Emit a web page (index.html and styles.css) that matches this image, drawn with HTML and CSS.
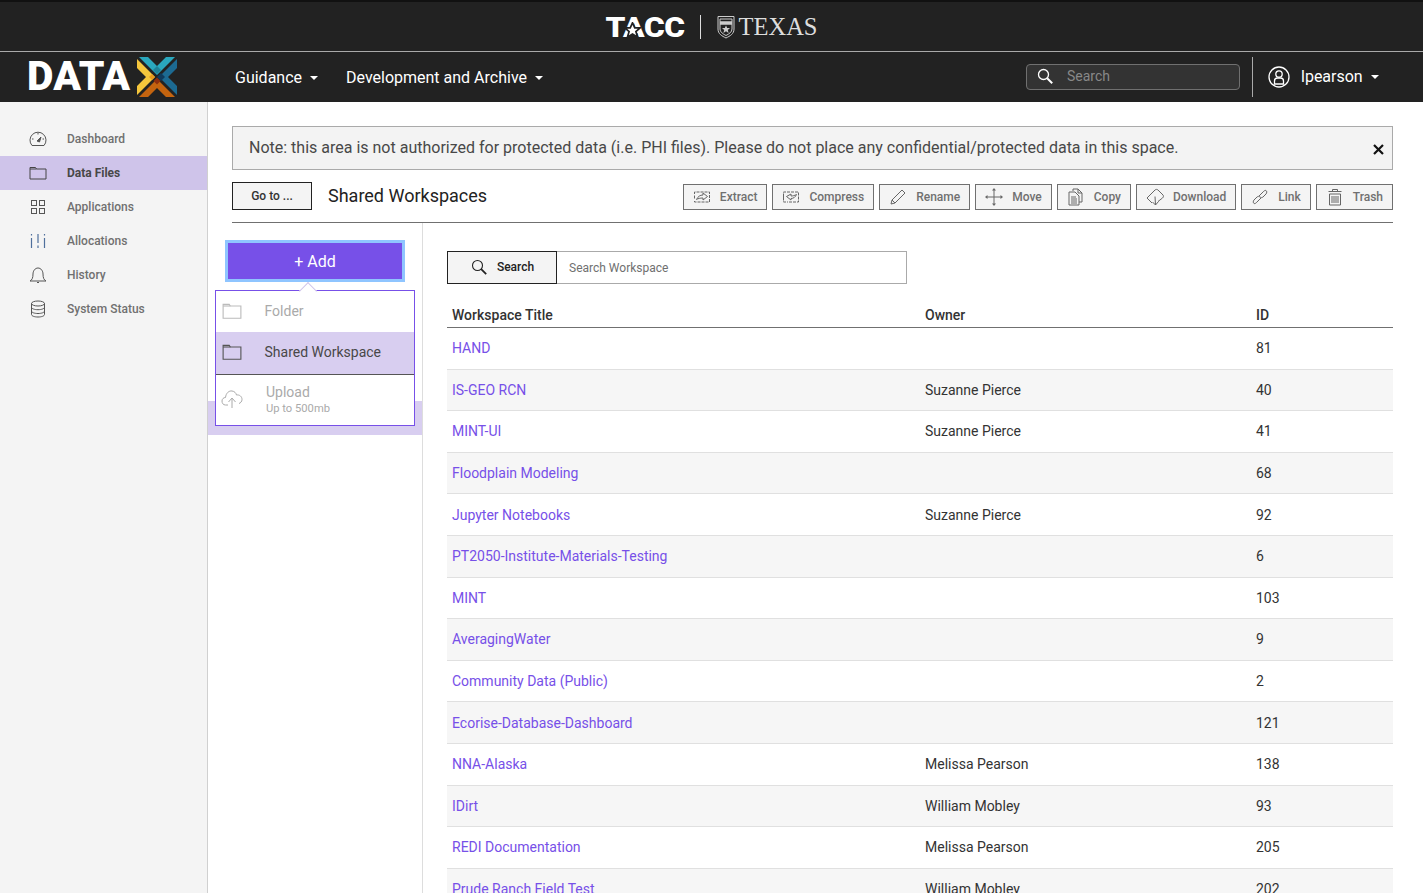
FILE: index.html
```html
<!DOCTYPE html>
<html lang="en">
<head>
    <meta charset="UTF-8">
    <title>Data Files</title>
    <link rel="stylesheet" href="styles.css">
</head>
<body>
    <div class="brand_bar">
        <span class="tacc_logo">
            <span class="tacc_text">TACC</span>
            <svg class="tacc_star" width="17" height="17" viewBox="0 0 20 20" fill="#fff" stroke="#222" stroke-width="2">
                <path d="M10 1l2.700 6h6.300l-5 4.200 2 6.800-6-3.800-6 3.800 2-6.800-5-4.200h6.300z"/>
            </svg>
        </span>
        <span class="brand_sep"></span>
        <svg class="shield" width="18" height="24" viewBox="0 0 18 24" fill="none" stroke="#ccc">
            <path d="M1 1.500h16v12.500c0 5-4 7-8 9-4-2-8-4-8-9z"/>
            <path d="M3 4h12v10c0 3-3 5-6 6.500-3-1.500-6-3.500-6-6.500z"/>
            <path d="M3 8h12" stroke-width="3.500"/>
            <path d="M9 10.500l1.200 2.500h2.800l-2.200 2 .8 3-2.600-1.700-2.600 1.700.8-3-2.200-2h2.800z" fill="#ccc" stroke="none"/>
        </svg>
        <span class="texas_logo">TEXAS</span>
    </div>

    <nav class="nav_bar">
        <a class="data_logo" href="#">
            <span class="data_text">DATA</span>
            <svg width="40" height="40" viewBox="0 0 40 40">
                <polygon points="2,0 11,0 20,9 29,0 38,0 20,18" fill="#2aa7bd"/>
                <polygon points="0,2 0,11 9,20 0,29 0,38 18,20" fill="#f5c63c"/>
                <polygon points="40,2 40,11 31,20 40,29 40,38 22,20" fill="#1c6a92"/>
                <polygon points="2,40 11,40 20,31 29,40 38,40 20,22" fill="#c4640f"/>
                <polygon points="12,20 15,17 18,20 15,23" fill="#e89a1c"/>
                <polygon points="20,20 24,16 28,20 24,24" fill="#0f3a5c"/>
                <polygon points="16.500,24 20,20.500 23.500,24 20,27.500" fill="#8f2f0e"/>
                <polygon points="16,13 20,9 24,13 20,17" fill="#1f8197"/>
            </svg>
        </a>
        <a class="nav_link" href="#">Guidance <i class="caret"></i></a>
        <a class="nav_link" href="#">Development and Archive <i class="caret"></i></a>
        <div class="nav_right">
            <div class="nav_search">
                <svg width="16" height="16" viewBox="0 0 16 16" fill="none" stroke="#fff" stroke-width="1.300">
                    <circle cx="6.500" cy="6.500" r="5"/>
                    <path d="M10.200 10.200l5 5" stroke-width="2"/>
                </svg>
                <span>Search</span>
            </div>
            <div class="nav_user">
                <svg width="22" height="22" viewBox="0 0 22 22" fill="none" stroke="#fff" stroke-width="1.300">
                    <circle cx="11" cy="11" r="10"/>
                    <circle cx="11" cy="8" r="3.200"/>
                    <path d="M6.500 18v-3c0-2 1.500-3 3-3h3c1.500 0 3 1 3 3v3z"/>
                </svg>
                <span>lpearson</span>
                <i class="caret"></i>
            </div>
        </div>
    </nav>

    <div class="page">
        <aside class="side_nav">
            <a class="side_item" href="#">
                <svg width="18" height="18" viewBox="0 0 18 18" fill="none" stroke="#555">
                    <path d="M3 15.500a8 8 0 1 1 12 0z"/>
                    <path d="M8 11l4-4-1.500 5z" fill="#555"/>
                    <path d="M9 3v1.500M3 9h1.500M15 9h-1.500"/>
                </svg>
                Dashboard
            </a>
            <a class="side_item side_active" href="#">
                <svg width="18" height="18" viewBox="0 0 18 18" fill="none" stroke="#444">
                    <path d="M1 3.500h5.500l1 1.500h9.500v10h-16z"/>
                    <path d="M1 5h6.500"/>
                </svg>
                Data Files
            </a>
            <a class="side_item" href="#">
                <svg width="18" height="18" viewBox="0 0 18 18" fill="none" stroke="#555">
                    <rect x="2.500" y="2.500" width="5" height="5"/>
                    <rect x="10.500" y="2.500" width="5" height="5"/>
                    <rect x="2.500" y="10.500" width="5" height="5"/>
                    <rect x="10.500" y="10.500" width="5" height="5"/>
                </svg>
                Applications
            </a>
            <a class="side_item" href="#">
                <svg width="18" height="18" viewBox="0 0 18 18" fill="none" stroke="#4f6f9c" stroke-width="1.200">
                    <path d="M2.500 2v1.500M2.500 6v10M9 2v9M9 13.500v2.500M15.500 2v1.500M15.500 6v10"/>
                </svg>
                Allocations
            </a>
            <a class="side_item" href="#">
                <svg width="18" height="18" viewBox="0 0 18 18" fill="none" stroke="#555">
                    <path d="M1 15c2-1 3-3 3-7 0-3 2-6 5-6s5 3 5 6c0 4 1 6 3 7z"/>
                    <path d="M8 16.500h2"/>
                </svg>
                History
            </a>
            <a class="side_item" href="#">
                <svg width="18" height="18" viewBox="0 0 18 18" fill="none" stroke="#555">
                    <ellipse cx="9" cy="3.500" rx="6.500" ry="2.500"/>
                    <path d="M2.500 3.500v11c0 1.500 3 2.500 6.500 2.500s6.500-1 6.500-2.500v-11"/>
                    <path d="M2.500 7.200c0 1.500 3 2.500 6.500 2.500s6.500-1 6.500-2.500M2.500 11c0 1.500 3 2.500 6.500 2.500s6.500-1 6.500-2.500"/>
                </svg>
                System Status
            </a>
        </aside>

        <main class="content">
            <div class="alert_box">
                <span>Note: this area is not authorized for protected data (i.e. PHI files). Please do not place any confidential/protected data in this space.</span>
                <svg class="alert_close" width="11" height="11" viewBox="0 0 11 11" stroke="#111" stroke-width="2.200">
                    <path d="M1 1l9 9M10 1l-9 9"/>
                </svg>
            </div>

            <div class="head_row">
                <button class="goto_btn">Go to ...</button>
                <h2 class="page_title">Shared Workspaces</h2>
                <div class="toolbar">
                    <button class="tool_btn">
                        <svg width="18" height="18" viewBox="0 0 18 18" fill="none" stroke="#666">
                            <path d="M1.500 6V4h15v10h-15v-2M1.500 7.500v3" stroke-dasharray="3 1"/>
                            <path d="M3.500 11.500c1.500-3 3.500-4.500 6.500-4.500V5l4.500 3.500-4.500 3.500V10c-3 0-5 .5-6.500 1.500z"/>
                        </svg>
                        Extract
                    </button>
                    <button class="tool_btn">
                        <svg width="18" height="18" viewBox="0 0 18 18" fill="none" stroke="#666">
                            <path d="M5 4h11.500v10H5M4 4H1.500v10H4M1.500 7v4" stroke-dasharray="3 1"/>
                            <path d="M14.500 6.500c-1 2.500-3 4-5.500 4V12L4.500 8.500 9 6v2c2 0 3.500-.5 5.500-1.500z"/>
                        </svg>
                        Compress
                    </button>
                    <button class="tool_btn">
                        <svg width="18" height="18" viewBox="0 0 18 18" fill="none" stroke="#666">
                            <path d="M2 16l1-4L13 2l3 3L6 15z"/>
                            <path d="M3 12l3 3"/>
                        </svg>
                        Rename
                    </button>
                    <button class="tool_btn">
                        <svg width="18" height="18" viewBox="0 0 18 18" fill="#666" stroke="#666">
                            <path d="M9 2v14M2 9h14" fill="none"/>
                            <path d="M9 0l2 2.500H7zM9 18l2-2.500H7zM0 9l2.500-2v4zM18 9l-2.500-2v4z" stroke="none"/>
                        </svg>
                        Move
                    </button>
                    <button class="tool_btn">
                        <svg width="18" height="18" viewBox="0 0 18 18" fill="none" stroke="#666">
                            <path d="M6 3V1h5l4 4v9h-3"/>
                            <path d="M11 1v4h4"/>
                            <path d="M2 4h6l4 4v9H2z"/>
                            <path d="M4 9h5M4 11h6M4 13h6M4 15h6"/>
                        </svg>
                        Copy
                    </button>
                    <button class="tool_btn">
                        <svg width="18" height="18" viewBox="0 0 18 18" fill="none" stroke="#666">
                            <path d="M6 15L1 10 9 2c1-.8 2-.8 3 0l5 5c.8 1 .5 2-.5 3L12 13.500"/>
                            <path d="M9 8.500l.5 8.500-3-3M9.500 17l3-3.500"/>
                        </svg>
                        Download
                    </button>
                    <button class="tool_btn">
                        <svg width="18" height="18" viewBox="0 0 18 18" fill="none" stroke="#666">
                            <path d="M8 8l4-4c1-1 2-2 3-1.500s1 2.500 0 3.500l-3 3c-1 .8-2 .8-3 0"/>
                            <path d="M10 10l-4 4c-1 1-2 2-3 1.500s-1-2.500 0-3.500l3-3c1-.8 2-.8 3 0"/>
                        </svg>
                        Link
                    </button>
                    <button class="tool_btn">
                        <svg width="18" height="18" viewBox="0 0 18 18" fill="none" stroke="#666">
                            <path d="M2.500 3.500h13M6.500 3.500V1.500h5v2"/>
                            <path d="M3.500 6h11v11h-11z"/>
                            <path d="M6 8v7M8 8v7M10 8v7M12 8v7"/>
                        </svg>
                        Trash
                    </button>
                </div>
            </div>

            <div class="columns">
                <div class="left_col">
                    <button class="add_btn">+ Add</button>
                    <div class="add_menu">
                        <i class="menu_arrow"></i>
                        <div class="menu_item menu_off">
                            <svg width="20" height="20" viewBox="0 0 18 18" fill="none" stroke="#bbb">
                                <path d="M1 3h5.500l1 1.500h9.500v11h-16z"/>
                                <path d="M1 4.500h6.500"/>
                            </svg>
                            <span>Folder</span>
                        </div>
                        <div class="menu_item menu_on">
                            <svg width="20" height="20" viewBox="0 0 18 18" fill="none" stroke="#555">
                                <path d="M1 3h5.500l1 1.500h9.500v11h-16z"/>
                                <path d="M1 4.500h6.500"/>
                            </svg>
                            <span>Shared Workspace</span>
                        </div>
                        <div class="menu_item menu_off menu_upload">
                            <svg width="22" height="20" viewBox="0 0 22 20" fill="none" stroke="#aaa">
                                <path d="M7 16H4.500C2 16 1 14 1 12c0-2 1.500-3.500 3.500-3.500C5 4 8 1.500 11 2c2.500.300 4 2 4.500 4 3-.500 5.500 1.500 5.500 4.500 0 2-1.500 3.500-3 4"/>
                                <path d="M11 19v-9M7.500 13l3.500-4 3.500 4"/>
                            </svg>
                            <div>
                                <span>Upload</span>
                                <small>Up to 500mb</small>
                            </div>
                        </div>
                    </div>
                    <div class="left_selected"></div>
                </div>

                <div class="right_col">
                    <div class="search_row">
                        <button class="search_btn">
                            <svg width="16" height="16" viewBox="0 0 16 16" fill="none" stroke="#222" stroke-width="1.100">
                                <circle cx="6.500" cy="6.500" r="5"/>
                                <path d="M10.200 10.200l5 5" stroke-width="1.800"/>
                            </svg>
                            Search
                        </button>
                        <div class="search_input">Search Workspace</div>
                    </div>

                    <table class="ws_table">
                        <thead>
                            <tr><th class="col_title">Workspace Title</th><th class="col_owner">Owner</th><th>ID</th></tr>
                        </thead>
                        <tbody>
                            <tr><td><a href="#">HAND</a></td><td></td><td>81</td></tr>
                            <tr><td><a href="#">IS-GEO RCN</a></td><td>Suzanne Pierce</td><td>40</td></tr>
                            <tr><td><a href="#">MINT-UI</a></td><td>Suzanne Pierce</td><td>41</td></tr>
                            <tr><td><a href="#">Floodplain Modeling</a></td><td></td><td>68</td></tr>
                            <tr><td><a href="#">Jupyter Notebooks</a></td><td>Suzanne Pierce</td><td>92</td></tr>
                            <tr><td><a href="#">PT2050-Institute-Materials-Testing</a></td><td></td><td>6</td></tr>
                            <tr><td><a href="#">MINT</a></td><td></td><td>103</td></tr>
                            <tr><td><a href="#">AveragingWater</a></td><td></td><td>9</td></tr>
                            <tr><td><a href="#">Community Data (Public)</a></td><td></td><td>2</td></tr>
                            <tr><td><a href="#">Ecorise-Database-Dashboard</a></td><td></td><td>121</td></tr>
                            <tr><td><a href="#">NNA-Alaska</a></td><td>Melissa Pearson</td><td>138</td></tr>
                            <tr><td><a href="#">IDirt</a></td><td>William Mobley</td><td>93</td></tr>
                            <tr><td><a href="#">REDI Documentation</a></td><td>Melissa Pearson</td><td>205</td></tr>
                            <tr><td><a href="#">Prude Ranch Field Test</a></td><td>William Mobley</td><td>202</td></tr>
                        </tbody>
                    </table>
                </div>
            </div>
        </main>
    </div>
</body>
</html>
```

FILE: styles.css
```css
*{
    margin: 0;
    padding: 0;
    box-sizing: border-box;
}
html,body{
    height: 893px;
    overflow: hidden;
}
body{
    font-family: Roboto, sans-serif;
    background-color: white;
    color: #222;
}
a{
    text-decoration: none;
}
button{
    font-family: Roboto, sans-serif;
    cursor: pointer;
}

/* top bars */
.brand_bar{
    height: 52px;
    background-color: #222;
    border-top: 2px solid #111;
    border-bottom: 1px solid #aaa;
    display: flex;
    justify-content: center;
    align-items: center;
}
.tacc_logo{
    position: relative;
    width: 79px;
    text-align: center;
    margin-top: 2px;
}
.tacc_text{
    display: inline-block;
    font-weight: 900;
    font-size: 28px;
    letter-spacing: -0.4px;
    color: white;
    transform: scaleX(1.13);
}
.tacc_star{
    position: absolute;
    left: 18px;
    top: 11px;
}
.brand_sep{
    width: 1px;
    height: 24px;
    background-color: #ddd;
    margin: 0 16px 0 15px;
}
.shield{
    margin-right: 4px;
}
.texas_logo{
    font-family: "Liberation Serif", serif;
    font-size: 24.500px;
    color: #ddd;
}
.nav_bar{
    height: 50px;
    background-color: #222;
    display: flex;
    align-items: center;
    padding-left: 28px;
}
.data_logo{
    display: flex;
    align-items: center;
    width: 207px;
    gap: 7px;
}
.data_text{
    font-size: 40.800px;
    font-weight: 900;
    color: white;
    letter-spacing: 0.2px;
    margin: -2px 0 0 -1px;
}
.nav_link{
    color: white;
    font-size: 16px;
    margin-right: 28px;
}
.caret{
    display: inline-block;
    width: 0;
    height: 0;
    border-top: 4px solid white;
    border-left: 4px solid transparent;
    border-right: 4px solid transparent;
    vertical-align: 3px;
    margin-left: 4px;
}
.nav_right{
    margin-left: auto;
    display: flex;
    align-items: center;
    height: 40px;
}
.nav_search{
    width: 214px;
    height: 26px;
    background-color: #333;
    border: 1px solid #707070;
    border-radius: 4px;
    display: flex;
    align-items: center;
    padding: 0 0 2px 10px;
    gap: 14px;
    color: #888;
    font-size: 14px;
}
.nav_user{
    margin-left: 12px;
    height: 40px;
    width: 171px;
    border-left: 1px solid #aaa;
    display: flex;
    align-items: center;
    padding: 0 0 1px 15px;
    color: white;
    font-size: 16px;
}
.nav_user span{
    margin-left: 11px;
    margin-right: 4px;
}

/* left side */
.page{
    display: flex;
    height: 791px;
}
.side_nav{
    width: 208px;
    flex-shrink: 0;
    background-color: #f4f4f4;
    border-right: 1px solid #d0d0d0;
    padding-top: 20px;
}
.side_item{
    display: flex;
    align-items: center;
    height: 34px;
    padding-left: 29px;
    gap: 20px;
    font-size: 12px;
    font-weight: 500;
    color: #707070;
}
.side_active{
    background-color: #cfc4ea;
    color: #484848;
    font-weight: 700;
}

/* main area */
.content{
    flex: 1;
    min-width: 0;
}
.alert_box{
    margin: 24px 30px 12px 24px;
    height: 44px;
    background-color: #f3f3f3;
    border: 1px solid #aaa;
    color: #484848;
    font-size: 16px;
    line-height: 42px;
    padding-left: 16px;
    position: relative;
}
.alert_close{
    position: absolute;
    right: 8px;
    top: 17px;
}
.head_row{
    margin: 0 30px 0 24px;
    height: 41px;
    border-bottom: 1px solid #707070;
    display: flex;
    align-items: flex-start;
}
.goto_btn{
    width: 80px;
    height: 28px;
    background-color: #f4f4f4;
    border: 1px solid #222;
    font-size: 12px;
    font-weight: 500;
    color: #333;
}
.page_title{
    font-size: 18px;
    font-weight: 400;
    color: #222;
    margin-left: 16px;
    line-height: 28px;
}
.toolbar{
    margin-left: auto;
    margin-top: 2px;
    display: flex;
    gap: 5px;
}
.tool_btn{
    height: 26px;
    background-color: #f4f4f4;
    border: 1px solid #707070;
    padding: 0 9px;
    display: flex;
    align-items: center;
    gap: 9px;
    font-size: 12px;
    font-weight: 500;
    color: #707070;
}
.columns{
    display: flex;
}
.left_col{
    width: 215px;
    height: 700px;
    border-right: 1px solid #ddd;
    position: relative;
    padding-top: 17px;
}
.add_btn{
    display: block;
    margin-left: 17px;
    width: 180px;
    height: 42px;
    background-color: #7750e8;
    border: 3px solid #8fc5ff;
    color: white;
    font-size: 16px;
}
.left_selected{
    height: 34px;
    margin-top: 119px;
    background-color: #d8cef0;
}
.add_menu{
    position: absolute;
    left: 7px;
    top: 67px;
    width: 200px;
    height: 136px;
    background-color: white;
    border: 1px solid #7750e8;
    z-index: 2;
}
.menu_arrow{
    position: absolute;
    left: 85px;
    top: -7px;
    width: 14px;
    height: 14px;
    background-color: white;
    border-left: 1px solid #cfc4ea;
    border-top: 1px solid #cfc4ea;
    transform: rotate(45deg) scale(0.9);
}
.menu_item{
    display: flex;
    align-items: center;
    height: 41px;
    padding: 0 0 2px 6px;
    gap: 22.500px;
    font-size: 14px;
    position: relative;
}
.menu_off{
    color: #aaa;
}
.menu_on{
    height: 43px;
    background-color: #d8cef0;
    color: #484848;
    border-bottom: 1px solid #555;
}
.menu_upload{
    height: 50px;
    padding: 0 0 2px 5px;
    gap: 23px;
}
.menu_upload span{
    display: block;
    line-height: 18px;
}
.menu_upload small{
    display: block;
    font-size: 11.200px;
    line-height: 15px;
}
.right_col{
    flex: 1;
    min-width: 0;
    padding: 28px 30px 0 24px;
}
.search_row{
    display: flex;
    height: 33px;
}
.search_btn{
    width: 110px;
    background-color: #f4f4f4;
    border: 1px solid #222;
    padding: 0 0 1px 1px;
    font-size: 12px;
    font-weight: 500;
    color: #222;
    display: flex;
    align-items: center;
    justify-content: center;
    gap: 10px;
}
.search_input{
    width: 350px;
    border: 1px solid #aaa;
    border-left: none;
    font-size: 12px;
    color: #707070;
    line-height: 32px;
    padding-left: 12px;
}
.ws_table{
    width: 946px;
    table-layout: fixed;
    border-collapse: collapse;
    margin-top: 21px;
    font-size: 14px;
}
.ws_table th{
    text-align: left;
    font-weight: 500;
    font-size: 14px;
    color: #333;
    height: 22.500px;
    padding: 0 5px 2px;
    border-bottom: 1px solid #707070;
}
.col_title{
    width: 473px;
}
.col_owner{
    width: 331px;
}
.ws_table td{
    height: 41.600px;
    padding: 0 5px;
    color: #333;
    border-bottom: 1px solid #e0e0e0;
}
.ws_table tbody tr:nth-child(even){
    background-color: #f6f6f6;
}
.ws_table a{
    color: #7750e8;
}
```
